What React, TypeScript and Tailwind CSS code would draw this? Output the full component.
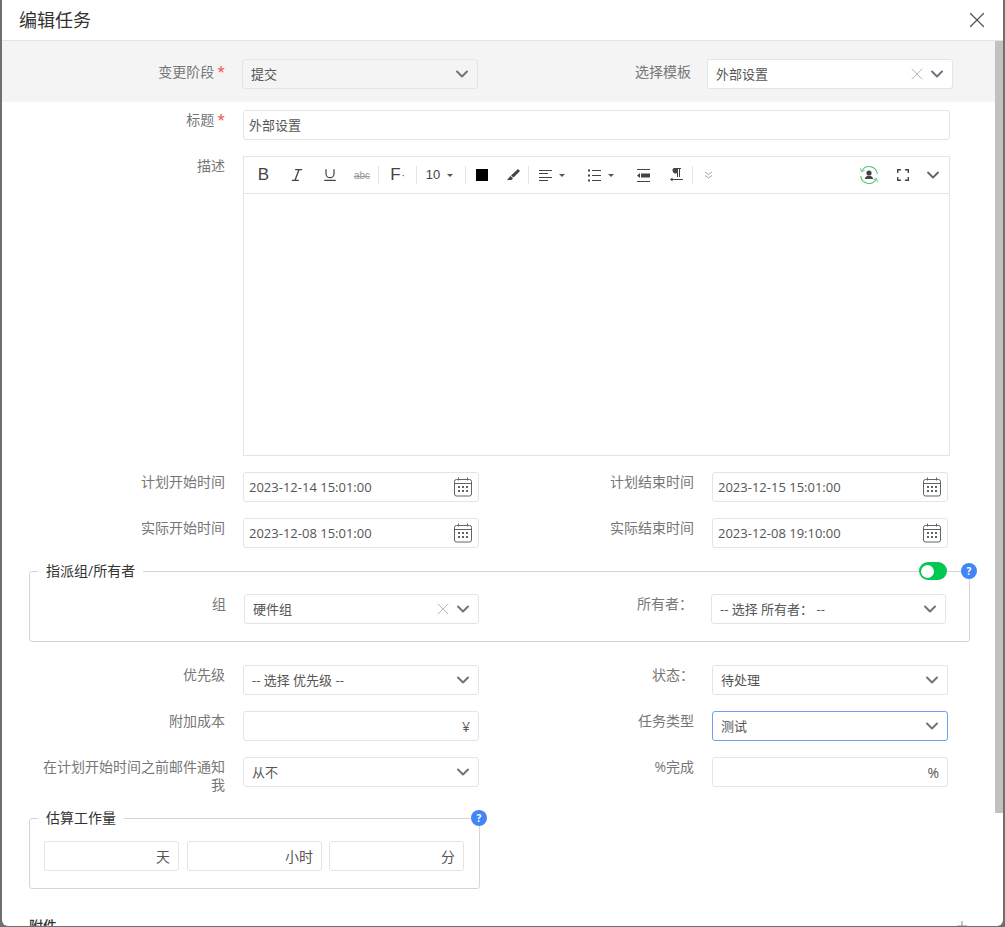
import type { ReactNode } from "react";
import { ChevronDown, Italic, Underline, X, Plus } from "lucide-react";

function Label({ children, required, className = "" }: { children: ReactNode; required?: boolean; className?: string }) {
  return (
    <div className={`mt-[1px] shrink-0 text-right text-[14px] leading-[18px] text-[#777] ${className}`}>
      {children}
      {required && <span className="ml-[3px] text-[#f5484d]">*</span>}
    </div>
  );
}

function Select({
  value,
  clearable,
  focused,
  className = "",
}: {
  value: string;
  clearable?: boolean;
  focused?: boolean;
  className?: string;
}) {
  return (
    <div
      className={`flex h-[30px] shrink-0 items-center rounded-[3px] border pl-[8px] pr-[5px] text-[13px] text-[#555] ${
        focused ? "border-[#6ea1f0]" : "border-[#e4e4e4]"
      } ${className}`}
    >
      <span className="flex-1 truncate pt-[1px]">{value}</span>
      {clearable && <X size={20} strokeWidth={1} className="text-[#a8a8a8]" />}
      <ChevronDown size={20} strokeWidth={2.4} className="text-[#6c757d]" />
    </div>
  );
}

function CalendarIcon() {
  return (
    <svg width="18" height="20" viewBox="0 0 18 20" fill="none" stroke="#5f6468" strokeWidth="1" className="shrink-0">
      <rect x="0.5" y="2.5" width="17" height="16.5" rx="2" />
      <path d="M1 6.5h16M4.500 0.500v3M13.500 0.500v3" />
      <g fill="#5f6468" stroke="none">
        <rect x="4" y="9" width="2" height="2" />
        <rect x="8" y="9" width="2" height="2" />
        <rect x="12" y="9" width="2" height="2" />
        <rect x="4" y="13" width="2" height="2" />
        <rect x="8" y="13" width="2" height="2" />
        <rect x="12" y="13" width="2" height="2" />
      </g>
    </svg>
  );
}

function DateInput({ value }: { value: string }) {
  return (
    <div className="flex h-[30px] w-[236px] shrink-0 items-center rounded-[3px] border border-[#e4e4e4] pl-[5px] pr-[6px] text-[13px] text-[#555]">
      <span className="flex-1 pt-[1px]">{value}</span>
      <CalendarIcon />
    </div>
  );
}

function SuffixInput({ suffix, className = "" }: { suffix: string; className?: string }) {
  return (
    <div
      className={`flex h-[30px] shrink-0 items-center justify-end rounded-[3px] border border-[#e4e4e4] pr-[8px] text-[14px] text-[#555] ${className}`}
    >
      {suffix}
    </div>
  );
}

function HelpBadge({ className = "" }: { className?: string }) {
  return (
    <div
      className={`absolute flex h-[16px] w-[16px] items-center justify-center rounded-full bg-[#4285f4] text-[10px] font-bold text-white ${className}`}
    >
      ?
    </div>
  );
}

function Caret() {
  return <span className="ml-[7px] h-0 w-0 border-x-[3px] border-t-[3px] border-x-transparent border-t-[#555]" />;
}

function Sep() {
  return <div className="h-[18px] w-px shrink-0 bg-[#e4e4e4]" />;
}

function AlignIcon() {
  return (
    <svg width="13" height="13" viewBox="0 0 13 13" stroke="#444" strokeWidth="1">
      <path d="M0 1.5h13M0 4.5h9M0 8.5h13M0 11.5h9" />
    </svg>
  );
}

function ListIcon() {
  return (
    <svg width="13" height="13" viewBox="0 0 13 13" stroke="#444" strokeWidth="1">
      <path d="M4 1.5h9M4 6.5h9M4 11.5h9" />
      <g fill="#444" stroke="none">
        <rect x="0" y="0.5" width="2" height="2" />
        <rect x="0" y="5.5" width="2" height="2" />
        <rect x="0" y="10.5" width="2" height="2" />
      </g>
    </svg>
  );
}

function Toolbar() {
  const cell = "flex h-full shrink-0 items-center justify-center text-[#444]";
  return (
    <div className="flex h-[37px] items-center border-b border-[#e4e4e4] pl-[3px] font-['Liberation_Sans',sans-serif]">
      <div className={`${cell} w-[33px] text-[17px]`}>B</div>
      <div className={`${cell} w-[33px]`}>
        <Italic size={16} strokeWidth={2} />
      </div>
      <div className={`${cell} w-[33px]`}>
        <Underline size={16} strokeWidth={1.8} />
      </div>
      <div className={`${cell} w-[32px] text-[10px] text-[#999] line-through`}>abc</div>
      <Sep />
      <div className={`${cell} w-[37px] text-[17px]`}>
        F<span className="ml-[1px] text-[10px]">·</span>
      </div>
      <Sep />
      <div className={`${cell} w-[48px] pr-[3px] text-[13px]`}>
        10
        <Caret />
      </div>
      <Sep />
      <div className={`${cell} w-[32px]`}>
        <div className="h-[12px] w-[12px] bg-black" />
      </div>
      <div className={`${cell} w-[30px]`}>
        <svg width="13" height="12" viewBox="0 0 13 12" fill="#444">
          <path d="M11 0l2 2-6.5 6.5-2.5-2zM3.5 7L6 9.3 4.5 11H0z" />
        </svg>
      </div>
      <Sep />
      <div className={`${cell} w-[49px] pr-[4px]`}>
        <AlignIcon />
        <Caret />
      </div>
      <div className={`${cell} w-[49px] pr-[4px]`}>
        <ListIcon />
        <Caret />
      </div>
      <div className={`${cell} w-[33px]`}>
        <svg width="13" height="13" viewBox="0 0 13 13" fill="#444">
          <path d="M0 0h13v1H0zM0 12h13v1H0zM0 6.5L3 4v5zM4 4.5h9v4H4z" />
        </svg>
      </div>
      <div className={`${cell} w-[32px]`}>
        <svg width="13" height="14" viewBox="0 0 13 14" fill="#444">
          <path d="M4 0h7v1h-1v8H9V1H8v8H7V5a2.5 2.5 0 0 1-3-5zM2 11h11v1H2zM0 11.5L2.500 9.500v4z" />
        </svg>
      </div>
      <Sep />
      <div className={`${cell} w-[31px]`}>
        <svg width="9" height="8" viewBox="0 0 9 8" fill="none" stroke="#999" strokeWidth="0.9">
          <path d="M1 1l3.500 2.500L8 1M1 4.500L4.500 7 8 4.500" />
        </svg>
      </div>
      <div className="ml-auto flex h-full items-center pr-[3px]">
        <div className={`${cell} w-[34px]`}>
          <svg width="20" height="20" viewBox="0 0 20 20" fill="none">
            <path d="M3 5.500A8.300 8.300 0 0 1 18.300 9M17 14.500A8.300 8.300 0 0 1 1.700 11" stroke="#4fc36e" strokeWidth="1.1" />
            <path d="M1.500 3.500l1 3 3-1M18.500 16.500l-1-3-3 1" stroke="#4fc36e" strokeWidth="1" />
            <circle cx="10" cy="8" r="2.600" fill="#444" />
            <path d="M5.800 14c.4-2.400 2-3.200 4.200-3.200s3.800.8 4.200 3.200z" fill="#444" />
          </svg>
        </div>
        <div className={`${cell} w-[34px]`}>
          <svg width="12" height="12" viewBox="0 0 12 12" fill="none" stroke="#444" strokeWidth="1.400">
            <path d="M0.700 4V0.700H4M8 0.700h3.300V4M11.300 8v3.300H8M4 11.300H0.700V8" />
          </svg>
        </div>
        <div className={`${cell} w-[26px]`}>
          <ChevronDown size={20} strokeWidth={2.2} className="text-[#5f6468]" />
        </div>
      </div>
    </div>
  );
}

function Row({ children, className = "" }: { children: ReactNode; className?: string }) {
  return <div className={`flex items-start ${className}`}>{children}</div>;
}

export default function App() {
  return (
    <div className="h-[927px] w-[1005px] overflow-hidden bg-[#6f6f6f] font-['Open_Sans','Noto_Sans_CJK_SC',sans-serif]">
      <div className="ml-[2px] flex h-[926px] w-[1001px] flex-col overflow-hidden rounded-b-[6px] bg-white">
        <header className="flex h-[41px] shrink-0 items-center justify-between border-b border-[#e4e4e4] pl-[17px] pr-[13px]">
          <h1 className="text-[18px] text-[#333]">编辑任务</h1>
          <X size={26} strokeWidth={1.2} className="text-[#555]" />
        </header>

        <div className="flex min-h-0 flex-1">
          <div className="min-w-0 flex-1 overflow-hidden">
            {/* 阶段 / 模板 */}
            <div className="flex h-[61px] items-start bg-[#f4f4f4] pt-[18px]">
              <Label required className="w-[223px] pt-[3px]">变更阶段</Label>
              <Select value="提交" className="ml-[17px] w-[236px]" />
              <Label className="w-[213px] pt-[3px]">选择模板</Label>
              <Select value="外部设置" clearable className="ml-[16px] w-[246px] bg-white" />
            </div>

            <Row className="mt-[8px]">
              <Label required className="w-[223px]">标题</Label>
              <input
                readOnly
                value="外部设置"
                className="ml-[18px] h-[30px] w-[707px] rounded-[3px] border border-[#e4e4e4] pb-[2px] pl-[5px] text-[13px] text-[#555]"
              />
            </Row>

            <Row className="mt-[16px]">
              <Label className="w-[223px]">描述</Label>
              <div className="ml-[18px] h-[300px] w-[707px] border border-[#e4e4e4]">
                <Toolbar />
              </div>
            </Row>

            <Row className="mt-[16px]">
              <Label className="w-[223px]">计划开始时间</Label>
              <div className="ml-[18px]">
                <DateInput value="2023-12-14 15:01:00" />
              </div>
              <Label className="w-[215px]">计划结束时间</Label>
              <div className="ml-[18px]">
                <DateInput value="2023-12-15 15:01:00" />
              </div>
            </Row>

            <Row className="mt-[16px]">
              <Label className="w-[223px]">实际开始时间</Label>
              <div className="ml-[18px]">
                <DateInput value="2023-12-08 15:01:00" />
              </div>
              <Label className="w-[215px]">实际结束时间</Label>
              <div className="ml-[18px]">
                <DateInput value="2023-12-08 19:10:00" />
              </div>
            </Row>

            {/* 指派组 */}
            <div className="relative ml-[27px] mt-[14px] w-[941px]">
              <fieldset className="h-[80px] rounded-[3px] border border-[#d5d5d5]">
                <legend className="ml-[8px] px-[8px] text-[14px] leading-[18px] text-[#333]">指派组/所有者</legend>
                <div className="mt-[14px] flex items-start">
                  <Label className="w-[196px]">组</Label>
                  <Select value="硬件组" clearable className="ml-[18px] w-[235px]" />
                  <Label className="w-[214px]">所有者：</Label>
                  <Select value="-- 选择 所有者： --" className="ml-[18px] w-[235px]" />
                </div>
              </fieldset>
              <div className="absolute right-[23px] top-0 flex h-[18px] w-[28px] items-center rounded-full bg-[#00c853] pl-[2px]">
                <div className="h-[13px] w-[13px] rounded-full bg-white" />
              </div>
              <HelpBadge className="right-[-7px] top-[1px]" />
            </div>

            <Row className="mt-[23px]">
              <Label className="w-[223px]">优先级</Label>
              <Select value="-- 选择 优先级 --" className="ml-[18px] w-[236px]" />
              <Label className="w-[215px]">状态：</Label>
              <Select value="待处理" className="ml-[18px] w-[236px]" />
            </Row>

            <Row className="mt-[16px]">
              <Label className="w-[223px]">附加成本</Label>
              <SuffixInput suffix="¥" className="ml-[18px] w-[236px]" />
              <Label className="w-[215px]">任务类型</Label>
              <Select value="测试" focused className="ml-[18px] w-[236px]" />
            </Row>

            <Row className="mt-[16px]">
              <Label className="w-[223px] pl-[40px]">在计划开始时间之前邮件通知我</Label>
              <Select value="从不" className="ml-[18px] w-[236px]" />
              <Label className="w-[215px]">%完成</Label>
              <SuffixInput suffix="%" className="ml-[18px] w-[236px]" />
            </Row>

            {/* 估算工作量 */}
            <div className="relative ml-[27px] mt-[15px] w-[451px]">
              <fieldset className="h-[80px] rounded-[3px] border border-[#d5d5d5]">
                <legend className="ml-[8px] px-[8px] text-[14px] leading-[18px] text-[#333]">估算工作量</legend>
                <div className="mt-[14px] flex gap-[8px] pl-[14px]">
                  <SuffixInput suffix="天" className="w-[135px]" />
                  <SuffixInput suffix="小时" className="w-[135px]" />
                  <SuffixInput suffix="分" className="-ml-[1px] w-[135px]" />
                </div>
              </fieldset>
              <HelpBadge className="right-[-7px] top-[1px]" />
            </div>

            <div className="ml-[27px] mt-[26px] flex w-[941px] items-center justify-between">
              <span className="text-[14px] font-medium text-[#333]">附件</span>
              <Plus size={16} strokeWidth={1} className="text-[#555]" />
            </div>
          </div>

          {/* 滚动条 */}
          <div className="w-[8px] shrink-0">
            <div className="h-[772px] bg-[#c1c1c0]" />
          </div>
        </div>
      </div>
    </div>
  );
}
